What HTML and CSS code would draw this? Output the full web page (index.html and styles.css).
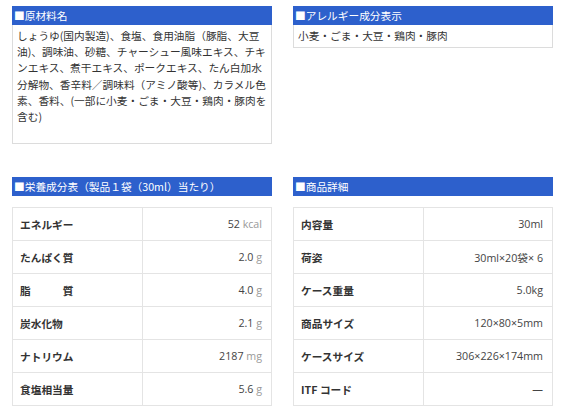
FILE: index.html
```html
<!DOCTYPE html>
<html lang="ja">
<head>
<meta charset="utf-8">
<link rel="stylesheet" href="styles.css">
</head>
<body>
<div class="page">
  <div class="row top">
    <section class="panel">
      <h2 class="head">■原材料名</h2>
      <div class="box box-tall">しょうゆ(国内製造)、食塩、食用油脂（豚脂、大豆油)、調味油、砂糖、チャーシュー風味エキス、チキンエキス、煮干エキス、ポークエキス、たん白加水分解物、香辛料／調味料（アミノ酸等)、カラメル色素、香料、(一部に小麦・ごま・大豆・鶏肉・豚肉を含む)</div>
    </section>
    <section class="panel">
      <h2 class="head">■アレルギー成分表示</h2>
      <div class="box">小麦・ごま・大豆・鶏肉・豚肉</div>
    </section>
  </div>
  <div class="row bottom">
    <section class="panel">
      <h2 class="head">■栄養成分表（製品１袋（30ml）当たり）</h2>
      <table class="spec">
        <tr><th>エネルギー</th><td>52 <span class="unit">kcal</span></td></tr>
        <tr><th>たんぱく質</th><td>2.0 <span class="unit">g</span></td></tr>
        <tr><th>脂　　　質</th><td>4.0 <span class="unit">g</span></td></tr>
        <tr><th>炭水化物</th><td>2.1 <span class="unit">g</span></td></tr>
        <tr><th>ナトリウム</th><td>2187 <span class="unit">mg</span></td></tr>
        <tr><th>食塩相当量</th><td>5.6 <span class="unit">g</span></td></tr>
      </table>
    </section>
    <section class="panel">
      <h2 class="head">■商品詳細</h2>
      <table class="spec">
        <tr><th>内容量</th><td>30ml</td></tr>
        <tr><th>荷姿</th><td>30ml×20袋× 6</td></tr>
        <tr><th>ケース重量</th><td>5.0kg</td></tr>
        <tr><th>商品サイズ</th><td>120×80×5mm</td></tr>
        <tr><th>ケースサイズ</th><td>306×226×174mm</td></tr>
        <tr><th>ITF コード</th><td>—</td></tr>
      </table>
    </section>
  </div>
</div>
</body>
</html>
```
FILE: styles.css
```css
html, body {
  margin: 0;
  padding: 0;
  background: #fff;
}
body {
  font-family: "Noto Sans CJK JP", "Noto Sans", sans-serif;
  color: #333;
  font-size: 10.7px;
}
.page {
  padding: 6px 14px 0 12px;
}
.row {
  display: grid;
  grid-template-columns: 260px 260px;
  column-gap: 21px;
  align-items: start;
}
.bottom {
  margin-top: 33px;
}
.head {
  margin: 0;
  height: 19px;
  line-height: 19px;
  background: #2d60cc;
  color: #fff;
  font-size: 10.7px;
  font-weight: normal;
  padding-left: 2px;
  white-space: nowrap;
}
.box {
  border: 1px solid #dcdcdc;
  border-top: none;
  padding: 3px 4px 3px 4px;
  line-height: 16.2px;
}
.box-tall {
  height: 112px;
}
.spec {
  margin-top: 11px;
  width: 260px;
  border-collapse: collapse;
  table-layout: fixed;
}
.spec th, .spec td {
  border: 1px solid #e4e4e4;
  height: 33px;
  padding: 0 8px;
  box-sizing: border-box;
  width: 50%;
}
.spec th {
  text-align: left;
  font-weight: bold;
  color: #333;
  padding-left: 7px;
}
.spec td {
  text-align: right;
  font-family: "Open Sans", "Noto Sans CJK JP", sans-serif;
  font-size: 10.7px;
  color: #444;
  padding-right: 9px;
}
.unit {
  color: #999;
}
```
